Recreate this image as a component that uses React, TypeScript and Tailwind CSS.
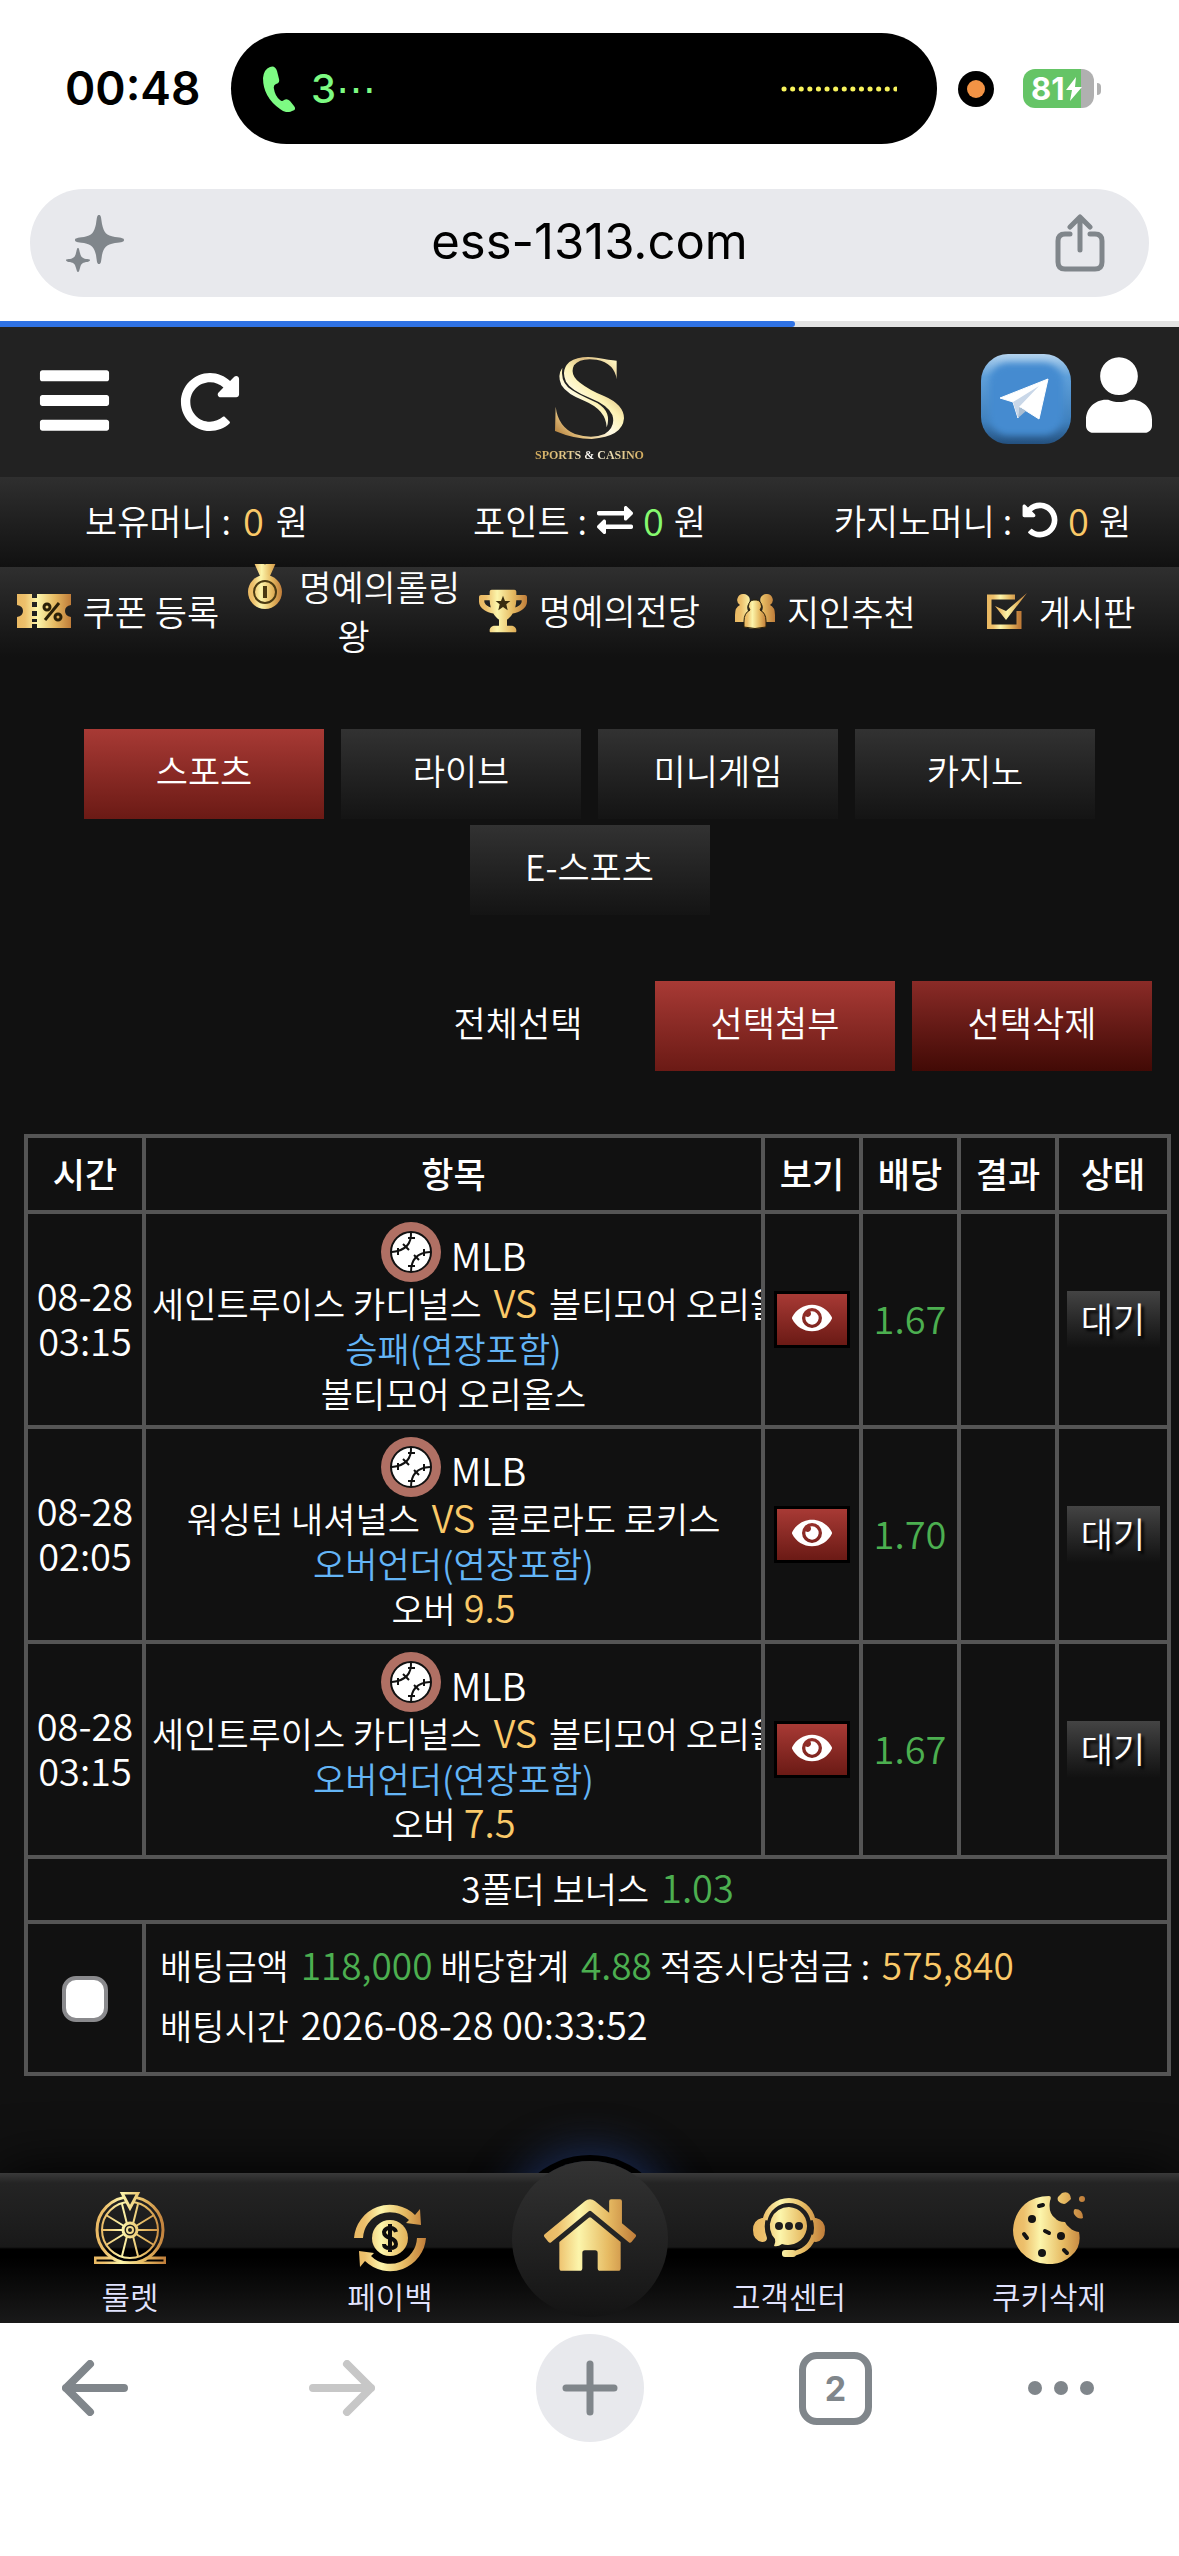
import { useState } from 'react'
import type { ReactNode } from 'react'
import {
  FaBars,
  FaExchangeAlt,
  FaEye,
  FaHome,
  FaRedoAlt,
  FaTrophy,
  FaUndoAlt,
  FaUser,
} from 'react-icons/fa'

const bets = [
  {
    date: '08-28',
    time: '03:15',
    home: '세인트루이스 카디널스',
    away: '볼티모어 오리올스',
    market: '승패(연장포함)',
    pick: '볼티모어 오리올스',
    line: '',
    odds: '1.67',
  },
  {
    date: '08-28',
    time: '02:05',
    home: '워싱턴 내셔널스',
    away: '콜로라도 로키스',
    market: '오버언더(연장포함)',
    pick: '오버',
    line: '9.5',
    odds: '1.70',
  },
  {
    date: '08-28',
    time: '03:15',
    home: '세인트루이스 카디널스',
    away: '볼티모어 오리올스',
    market: '오버언더(연장포함)',
    pick: '오버',
    line: '7.5',
    odds: '1.67',
  },
]

const tabs = ['스포츠', '라이브', '미니게임', '카지노', 'E-스포츠']

function GoldStops() {
  return (
    <>
      <stop offset="0" stopColor="#e9b862" />
      <stop offset="0.15" stopColor="#edc06c" />
      <stop offset="0.38" stopColor="#fcf5ab" />
      <stop offset="0.7" stopColor="#e6ba62" />
      <stop offset="1" stopColor="#bf7c39" />
    </>
  )
}

function Gradients() {
  return (
    <svg className="absolute size-0" aria-hidden="true">
      <defs>
        <linearGradient id="gold">
          <GoldStops />
        </linearGradient>
        <linearGradient
          id="gold72"
          gradientUnits="userSpaceOnUse"
          x1="0"
          x2="72"
          y1="0"
          y2="0"
        >
          <GoldStops />
        </linearGradient>
        <linearGradient id="logo" x1="0" y1="1" x2="0.8" y2="0">
          <stop offset="0" stopColor="#a8702c" />
          <stop offset="0.22" stopColor="#e6c483" />
          <stop offset="0.45" stopColor="#fffbe6" />
          <stop offset="0.62" stopColor="#fdf2b4" />
          <stop offset="0.8" stopColor="#dcbc80" />
          <stop offset="1" stopColor="#fff6c2" />
        </linearGradient>
      </defs>
    </svg>
  )
}

function StatusBar() {
  return (
    <div className="flex h-[177px] items-start bg-white pl-[65px] pr-[78px] pt-[33px] font-['Inter',sans-serif]">
      <span className="w-[166px] text-[46px] font-semibold leading-[111px] text-black">
        00:48
      </span>
      <div className="flex h-[111px] flex-1 items-center rounded-full bg-black pl-8 pr-10">
        <svg viewBox="0 0 32 46" className="h-[46px] w-8 fill-[#7dfb83]">
          <path d="M7 1q5-2 7 4l2 8q1 4-3 5-3 1-2 5 1 7 6 11 2 2 4 0 3-2 6 1l4 5q3 4-2 5-6 3-12-2Q0 31 0 12 1 3 7 1z" />
        </svg>
        <span className="ml-4 text-[40px] font-medium text-[#7dfb83]">
          3⋯
        </span>
        <svg viewBox="0 0 116 6" className="ml-auto h-[6px] w-[116px]">
          <path
            d="M3 3H115"
            stroke="#f8f35c"
            strokeWidth="5"
            strokeLinecap="round"
            strokeDasharray="0.1 8.5"
          />
        </svg>
      </div>
      <div className="flex h-[111px] items-center pl-[21px]">
        <span className="flex size-9 items-center justify-center rounded-full bg-black">
          <span className="size-[18px] rounded-full bg-[#f29345]" />
        </span>
        <div className="ml-[29px] flex h-[39px] w-[71px] items-center rounded-xl bg-[linear-gradient(90deg,#65c466_58px,#b0b0b0_58px)] pl-2 text-white">
          <span className="text-[31px] font-bold leading-[39px]">81</span>
          <svg viewBox="0 0 18 24" className="h-6 w-[18px] fill-white">
            <path d="M11 0 1 13h6L5 24 17 10h-7z" />
          </svg>
        </div>
        <span className="ml-[3px] h-3 w-1 rounded-r-full bg-[#b0b0b0]" />
      </div>
    </div>
  )
}

function AddressBar() {
  return (
    <div className="bg-white px-[30px] pb-6 pt-3">
      <div className="flex h-[108px] items-center rounded-full bg-[#e8e9ed] px-9 text-[#80868b]">
        <button type="button" aria-label="AI">
          <svg viewBox="0 0 58 58" className="size-[58px] fill-current">
            <path d="M33 1c2 0 2 2 3 9 2 9 4 11 13 13 7 1 9 1 9 3s-2 2-9 3c-9 2-11 4-13 12-1 7-1 9-3 9s-2-2-3-9c-2-8-4-10-12-12-7-1-9-1-9-3s2-2 9-3c8-2 10-4 12-13 1-7 1-9 3-9z" />
            <path d="M12 34c1 0 1 1 2 5 1 4 2 5 6 6 4 0 4 1 4 1s0 2-4 2c-4 1-5 2-6 6-1 3-1 4-2 4s-1-1-2-4c-1-4-2-5-6-6-4 0-4-2-4-2s0-1 4-1c4-1 5-2 6-6 1-4 1-5 2-5z" />
          </svg>
        </button>
        <input
          type="text"
          readOnly
          aria-label="주소"
          defaultValue="ess-1313.com"
          className="min-w-0 flex-1 bg-transparent pb-[2px] text-center font-['Inter',sans-serif] text-[49px] text-black outline-none"
        />
        <button type="button" aria-label="공유" className="mr-2">
          <svg
            viewBox="0 0 50 58"
            fill="none"
            stroke="currentColor"
            strokeWidth="5"
            strokeLinecap="round"
            strokeLinejoin="round"
            className="h-[58px] w-[50px]"
          >
            <path d="M15 20h-5q-7 0-7 7v21q0 7 7 7h30q7 0 7-7V27q0-7-7-7h-5" />
            <path d="M25 36V4M15 13 25 3l10 10" />
          </svg>
        </button>
      </div>
    </div>
  )
}

function Logo() {
  return (
    <a href="#" className="flex flex-col items-center">
      <svg viewBox="162 78 213 252" className="h-[84px] w-[71px]">
        <path
          fill="url(#logo)"
          d="M350 92V148Q344 100 290 89Q240 82 222 106Q208 134 240 158Q268 180 312 198Q372 224 372 265Q368 320 275 327Q222 327 165 303L167 230Q174 290 225 312Q276 328 314 312Q348 290 337 255Q325 226 270 204Q212 180 198 155Q182 120 208 96Q238 76 290 83Q330 90 350 92Z"
        />
        <path
          fill="url(#logo)"
          d="M187 113Q171 136 184 165Q200 192 254 213Q318 240 320 292Q336 246 292 219Q226 190 204 172Q181 148 187 113Z"
        />
      </svg>
      <span className="mt-2 bg-[linear-gradient(90deg,#d2aa5b,#e8cf94_35%,#ffffff_50%,#f3e6c0_65%,#d2aa5b)] bg-clip-text font-['Liberation_Serif',serif] text-[12px] font-bold leading-[14px] text-transparent">
        SPORTS &amp; CASINO
      </span>
    </a>
  )
}

function Header() {
  return (
    <header className="grid h-[150px] grid-cols-3 items-center bg-[#222222] pl-[35px] pr-[27px] text-white">
      <div className="flex items-center">
        <button type="button" aria-label="메뉴" className="pb-1">
          <FaBars className="size-[79px]" />
        </button>
        <button type="button" aria-label="새로고침" className="ml-[66px]">
          <FaRedoAlt className="size-[60px]" />
        </button>
      </div>
      <div className="flex justify-center pr-2 pt-[14px]">
        <Logo />
      </div>
      <div className="flex items-center justify-end gap-[15px] pb-[6px]">
        <a href="#" aria-label="텔레그램">
          <svg viewBox="0 0 90 90" className="size-[90px]">
            <defs>
              <linearGradient id="tgEdge" x1="0" y1="0" x2="0" y2="1">
                <stop offset="0" stopColor="#b4d3ee" />
                <stop offset="0.25" stopColor="#5fa0da" />
                <stop offset="0.75" stopColor="#3f80bd" />
                <stop offset="1" stopColor="#24507e" />
              </linearGradient>
              <filter id="tgSoft">
                <feGaussianBlur stdDeviation="3" />
              </filter>
            </defs>
            <rect width="90" height="90" rx="27" fill="url(#tgEdge)" />
            <rect
              x="8"
              y="9"
              width="74"
              height="72"
              rx="20"
              fill="#448bd0"
              filter="url(#tgSoft)"
            />
            <path
              d="M19 44 67 25 58 65 39 53 37 64 32 48z"
              fill="#fff"
              stroke="#fff"
              strokeWidth="1"
              strokeLinejoin="round"
            />
            <path d="M32 48 58 32 38 53 37 64z" fill="#c9d7e8" />
            <path d="M38 53 45 57 37 64z" fill="#a9bed3" />
          </svg>
        </a>
        <button type="button" aria-label="내 정보" className="pb-2">
          <FaUser className="h-[76px] w-[66px]" />
        </button>
      </div>
    </header>
  )
}

function MoneyBar() {
  return (
    <div className="grid h-[90px] grid-cols-3 items-center bg-linear-to-b from-[#2f2f2f] to-[#111111] pb-1 text-[35px] leading-[86px] text-white">
      <p className="flex items-center justify-center gap-3">
        보유머니 :<span className="text-[38px] text-[#fac968]">0</span>원
      </p>
      <p className="flex items-center justify-center gap-[10px]">
        포인트 :
        <button type="button" aria-label="포인트 전환">
          <FaExchangeAlt className="size-9" />
        </button>
        <span className="text-[38px] text-[#86f96f]">0</span>원
      </p>
      <p className="flex items-center justify-center gap-[10px]">
        카지노머니 :
        <button type="button" aria-label="카지노머니 회수">
          <FaUndoAlt className="size-9" />
        </button>
        <span className="text-[38px] text-[#fac968]">0</span>원
      </p>
    </div>
  )
}

function CouponIcon() {
  return (
    <svg viewBox="0 0 54 34" className="-mt-[10px] mr-3 inline h-[34px] w-[54px]">
      <path
        fill="url(#gold)"
        fillRule="evenodd"
        d="M0 0h15v4h5V0h34v11q-6 1-6 6t6 6v11H20v-4h-5v4H0V23q6-1 6-6t-6-6zM15 8v5h5V8zm0 9v5h5v-5zm0 8v3h5v-3z"
      />
      <path d="M42 9 28 26" stroke="#2a2008" strokeWidth="3" />
      <circle cx="30" cy="13" r="3" fill="none" stroke="#2a2008" strokeWidth="3" />
      <circle cx="41" cy="23" r="3" fill="none" stroke="#2a2008" strokeWidth="3" />
    </svg>
  )
}

function MedalIcon() {
  return (
    <svg viewBox="0 8 36 46" className="-mt-[10px] mr-4 inline h-[46px] w-9">
      <path d="M4 0h10l4 9 4-9h10l-9 20h-10z" fill="url(#gold)" />
      <circle cx="18" cy="36" r="17" fill="url(#gold)" />
      <circle cx="18" cy="36" r="11" fill="none" stroke="#4a3a12" strokeWidth="2" />
      <path d="M18 30v12" stroke="#4a3a12" strokeWidth="4" />
    </svg>
  )
}

function TrophyIcon() {
  return (
    <span className="relative -mt-[10px] mr-3 inline-block align-middle">
      <FaTrophy fill="url(#gold)" className="size-12" />
      <svg viewBox="0 0 24 24" className="absolute left-4 top-2 size-4">
        <path
          d="M12 1l3 8h8l-6 5 2 9-7-5-7 5 2-9-6-5h8z"
          fill="#3a2d10"
        />
      </svg>
    </span>
  )
}

function FriendsIcon() {
  return (
    <svg
      viewBox="0 0 40 36"
      className="-mt-[10px] mr-3 inline h-9 w-10"
      fill="url(#gold)"
    >
      <path d="M9 1a6 6 0 0 1 5 9q-3 3-1 8l-3 11H0V22q0-8 5-10A6 6 0 0 1 9 1zM31 1a6 6 0 0 0-5 9q3 3 1 8l3 11h10V22q0-8-5-10a6 6 0 0 0-4-11z" />
      <path
        d="M20 7a6 6 0 0 1 5 10q6 3 6 11v6q-11 3-22 0v-6q0-8 6-11a6 6 0 0 1 5-10z"
        stroke="#2a2008"
      />
    </svg>
  )
}

function BoardIcon() {
  return (
    <svg viewBox="0 0 40 36" className="-mt-[10px] mr-3 inline h-9 w-10">
      <path
        d="M32 18v16H2V4h26"
        fill="none"
        stroke="url(#gold)"
        strokeWidth="5"
      />
      <path d="M8 13l11 5L40 0 19 27z" fill="url(#gold)" />
    </svg>
  )
}

const quickLinks = [
  { title: '쿠폰 등록', icon: <CouponIcon /> },
  { title: '명예의롤링왕', icon: <MedalIcon /> },
  { title: '명예의전당', icon: <TrophyIcon /> },
  { title: '지인추천', icon: <FriendsIcon /> },
  { title: '게시판', icon: <BoardIcon /> },
]

function QuickNav() {
  return (
    <nav className="grid h-[90px] grid-cols-5 content-center items-center bg-linear-to-b from-[#2f2f2f] to-[#111111] pb-1">
      {quickLinks.map((link) => (
        <a
          key={link.title}
          href="#"
          className="break-all px-1 text-center text-[35px] leading-[49px] text-white"
        >
          {link.icon}
          {link.title}
        </a>
      ))}
    </nav>
  )
}

function Baseball() {
  return (
    <svg viewBox="0 0 60 60" className="size-[60px]">
      <circle cx="30" cy="30" r="30" fill="#b07064" />
      <circle cx="30" cy="30" r="20" fill="#fff" stroke="#111" strokeWidth="2" />
      <g fill="none" stroke="#111" strokeWidth="2">
        <path d="M30 10Q31 28 11 30M49 30Q30 31 30 50" />
        <path d="M27 16h7M22 22l6 6M17 26v7M43 27v7M33 33l5 5M27 44h7" />
      </g>
    </svg>
  )
}

function BetTable() {
  return (
    <div className="pl-6 pr-2">
      <table className="w-full table-fixed border-collapse text-center text-[35px] leading-[45px] text-white [&_td]:border-4 [&_td]:border-[#555555] [&_th]:border-4 [&_th]:border-[#555555]">
        <colgroup>
          <col className="w-[118px]" />
          <col />
          <col className="w-[98px]" />
          <col className="w-[98px]" />
          <col className="w-[98px]" />
          <col className="w-[112px]" />
        </colgroup>
        <thead>
          <tr className="h-[76px]">
            {['시간', '항목', '보기', '배당', '결과', '상태'].map((title) => (
              <th key={title} className="px-0 pb-1 pt-0 font-medium">
                {title}
              </th>
            ))}
          </tr>
        </thead>
        <tbody>
          {bets.map((bet, index) => (
            <tr key={index} className="h-[215px]">
              <td className="px-0 pb-[6px] pt-0 text-[38px]">
                {bet.date}
                <br />
                {bet.time}
              </td>
              <td className="overflow-hidden whitespace-nowrap px-[6px] pb-[2px] pt-0">
                <div className="flex h-[58px] items-start justify-center gap-[10px]">
                  <Baseball />
                  <span className="mt-[10px] text-[38px]">MLB</span>
                </div>
                <p>
                  {bet.home}{' '}
                  <span className="mx-1 text-[38px] leading-[40px] text-[#fac968]">
                    VS
                  </span>{' '}
                  {bet.away}
                </p>
                <p className="text-[#64b5f6]">{bet.market}</p>
                <p>
                  {bet.pick}{' '}
                  <span className="text-[38px] leading-[40px] text-[#fac968]">
                    {bet.line}
                  </span>
                </p>
              </td>
              <td className="p-0">
                <button
                  type="button"
                  aria-label="보기"
                  className="inline-flex h-[57px] w-[76px] items-center justify-center border-[3px] border-black bg-linear-to-b from-[#a83a35] to-[#6b1a15] pb-1 align-middle"
                >
                  <FaEye className="size-10" />
                </button>
              </td>
              <td className="px-0 pb-1 pt-0 text-[38px] text-[#4caf50]">
                {bet.odds}
              </td>
              <td className="p-0" />
              <td className="p-0">
                <span className="inline-block h-[57px] w-[93px] bg-linear-to-b from-[#444444] to-[#111111] align-middle leading-[53px] text-shadow-[3px_3px_3px_#000000]">
                  대기
                </span>
              </td>
            </tr>
          ))}
          <tr className="h-[65px]">
            <td colSpan={6} className="px-0 pb-1 pt-0">
              3폴더 보너스{' '}
              <span className="ml-1 text-[38px] leading-[40px] text-[#4caf50]">
                1.03
              </span>
            </td>
          </tr>
          <tr className="h-[152px]">
            <td className="px-0 pb-1 pt-0">
              <input
                type="checkbox"
                aria-label="배팅내역 선택"
                className="size-[46px] appearance-none rounded-[14px] border-4 border-[#8a8a8d] bg-white align-middle checked:bg-[#2f72e4]"
              />
            </td>
            <td
              colSpan={5}
              className="px-[14px] pb-[6px] pt-0 text-left leading-[60px]"
            >
              <p>
                배팅금액{' '}
                <span className="ml-1 text-[37px] leading-[40px] text-[#4caf50]">
                  118,000
                </span>{' '}
                배당합계{' '}
                <span className="ml-1 text-[37px] leading-[40px] text-[#4caf50]">
                  4.88
                </span>{' '}
                적중시당첨금 :{' '}
                <span className="ml-1 text-[37px] leading-[40px] text-[#fac968]">
                  575,840
                </span>
              </p>
              <p>
                배팅시간{' '}
                <span className="ml-1 text-[38px] leading-[40px]">
                  2026-08-28 00:33:52
                </span>
              </p>
            </td>
          </tr>
        </tbody>
      </table>
    </div>
  )
}

function WheelIcon() {
  return (
    <svg
      viewBox="0 0 72 72"
      className="size-[72px]"
      fill="none"
      stroke="url(#gold72)"
      strokeWidth="3"
    >
      <circle cx="36" cy="38" r="33" />
      <circle cx="36" cy="38" r="28" strokeWidth="2" />
      <circle cx="36" cy="38" r="7" />
      <circle cx="36" cy="38" r="3" strokeWidth="2" />
      <path
        d="M8 38.1H29M43 38.1H64M30 34 12 23M42 34 60 23M33 32 28 12M39 32 44 12M30 42 12 53M42 42 60 53M33 44 28 64M39 44 44 64"
        strokeWidth="2"
      />
      <path d="M28 1h16l-8 15z" fill="#1d1d1d" />
      <path d="M18 66H1v5h70v-5H54" />
    </svg>
  )
}

function PaybackIcon() {
  return (
    <svg viewBox="0 0 72 72" className="size-[72px]" fill="url(#gold72)">
      <path d="M0 36A36 36 0 0 1 61 13l5-6 1 16-15-2 3-3A27 27 0 0 0 9 36z" />
      <path d="M72 36A36 36 0 0 1 11 59l-5 6-1-16 15 2-3 3A27 27 0 0 0 63 36z" />
      <circle cx="36" cy="36" r="18" />
      <path
        d="M42 30q-1-4-6-4t-6 4q0 4 6 6t6 6q0 4-6 4t-6-4M36 22v28"
        fill="none"
        stroke="#0d0d0d"
        strokeWidth="4"
      />
    </svg>
  )
}

function SupportIcon() {
  return (
    <svg viewBox="0 0 72 72" className="size-[72px]" fill="url(#gold72)">
      <path
        d="M12 28A24.500 24.500 0 0 1 60 28M61 43Q57 59 38 62"
        fill="none"
        stroke="url(#gold72)"
        strokeWidth="5"
      />
      <path d="M9 26Q0 28 0 38t9 12q5 0 5-4-4-10-1-20zM63 26q9 2 9 12t-9 12q-4 0-4-4 4-10 0-20z" />
      <path d="M36 15a19 19 0 1 1-7 37q-4 3-8 2 2-4 1-7A19 19 0 0 1 36 15z" />
      <rect x="29" y="58" width="14" height="7" rx="3" />
      <g fill="#1d1d1d">
        <circle cx="26" cy="34" r="4" />
        <circle cx="36" cy="34" r="4" />
        <circle cx="46" cy="34" r="4" />
      </g>
    </svg>
  )
}

function CookieIcon() {
  return (
    <svg viewBox="0 0 72 72" className="size-[72px]" fill="url(#gold72)">
      <path d="M36 4q3 0 1 5-2 12 5 17 3 4 10 4 1 3 5 6 3 3 9 4Q69 55 58 64 48 73 34 72 18 71 8 60 0 50 0 38 1 22 12 12 22 4 36 4z" />
      <path d="M49 1q8-3 9 6-5 5-7 5-8-2-6-7zM62 17q8 0 8 9-5 2-9-4-1-4 1-5z" />
      <circle cx="69" cy="7" r="3" />
      <g fill="#141414">
        <circle cx="19" cy="27" r="4" />
        <circle cx="48" cy="44" r="4" />
        <circle cx="29" cy="61" r="4" />
      </g>
      <path
        d="M26 14 30 13M32 39 36 41M11 42 14 46M51 58 54 61"
        stroke="#141414"
        strokeWidth="4"
        strokeLinecap="round"
      />
    </svg>
  )
}

function BottomLink({ title, children }: { title: string; children: ReactNode }) {
  return (
    <a
      href="#"
      className="flex flex-1 flex-col items-center justify-end pb-[6px] text-[31px] leading-[43px] text-[#e2e4ff]"
    >
      {children}
      {title}
    </a>
  )
}

function BottomNav() {
  return (
    <nav className="relative isolate h-[150px] shadow-[0_0_60px_#000000]">
      <div className="absolute -top-3 left-1/2 -z-20 size-[156px] -translate-x-1/2 rounded-full shadow-[0_0_0_6px_#000000,0_0_40px_12px_#1a2a52]" />
      <div className="flex h-full bg-[linear-gradient(180deg,#3a3a3a_0px,#242424_10px,#191919_74px,#000000_76px,#000000_84px,#191919_150px)]">
        <BottomLink title="룰렛">
          <span className="mb-[10px]">
            <WheelIcon />
          </span>
        </BottomLink>
        <BottomLink title="페이백">
          <PaybackIcon />
        </BottomLink>
        <div className="flex w-[139px] justify-center">
          <a
            href="#"
            aria-label="홈"
            className="-mt-3 flex size-[156px] shrink-0 items-center justify-center rounded-full bg-linear-to-b from-[#333333] to-[#141414] pb-2"
          >
            <FaHome fill="url(#gold)" className="size-[92px]" />
          </a>
        </div>
        <BottomLink title="고객센터">
          <span className="mb-[10px]">
            <SupportIcon />
          </span>
        </BottomLink>
        <BottomLink title="쿠키삭제">
          <span className="mb-[10px]">
            <CookieIcon />
          </span>
        </BottomLink>
      </div>
    </nav>
  )
}

function BrowserToolbar() {
  return (
    <div className="relative flex-1 bg-white pt-[11px]">
      <div className="grid h-[108px] grid-cols-[190fr_304fr_192fr_299fr_152fr] place-items-center pr-[42px] text-[#80868b]">
        <button type="button" aria-label="뒤로">
          <svg
            viewBox="0 0 66 56"
            fill="none"
            stroke="currentColor"
            strokeWidth="8"
            strokeLinecap="round"
            strokeLinejoin="round"
            className="h-14 w-[66px]"
          >
            <path d="M62 28H4M28 4 4 28l24 24" />
          </svg>
        </button>
        <button type="button" aria-label="앞으로" className="text-[#c7c7c7]">
          <svg
            viewBox="0 0 66 56"
            fill="none"
            stroke="currentColor"
            strokeWidth="8"
            strokeLinecap="round"
            strokeLinejoin="round"
            className="h-14 w-[66px]"
          >
            <path d="M4 28H62M38 4l24 24L38 52" />
          </svg>
        </button>
        <button
          type="button"
          aria-label="새 탭"
          className="flex size-[108px] items-center justify-center rounded-full bg-[#e8e9ed]"
        >
          <svg
            viewBox="0 0 56 56"
            stroke="currentColor"
            strokeWidth="7"
            strokeLinecap="round"
            className="size-14"
          >
            <path d="M28 4V52M4 28H52" />
          </svg>
        </button>
        <button
          type="button"
          className="size-[73px] rounded-[18px] border-[7px] border-current font-['Inter',sans-serif] text-[34px] font-bold leading-[59px]"
        >
          2
        </button>
        <button type="button" aria-label="더보기" className="flex gap-3">
          <span className="size-[14px] rounded-full bg-current" />
          <span className="size-[14px] rounded-full bg-current" />
          <span className="size-[14px] rounded-full bg-current" />
        </button>
      </div>
    </div>
  )
}

export default function App() {
  const [activeTab, setActiveTab] = useState<number>(0)

  return (
    <div className="flex min-h-screen flex-col bg-white">
      <Gradients />
      <StatusBar />
      <AddressBar />
      <div
        role="progressbar"
        aria-label="로딩"
        aria-valuenow={67}
        className="h-[6px] bg-[#e3e3e3]"
      >
        <div className="h-full w-[67.4%] rounded-r-full bg-[#2f72e4]" />
      </div>

      <div className="bg-[#111111] font-['Noto_Sans_CJK_KR',sans-serif] font-[350]">
        <Header />
        <MoneyBar />
        <QuickNav />

        <div className="flex flex-wrap justify-center gap-x-[17px] gap-y-[6px] px-10 pt-[72px]">
          {tabs.map((tab, index) => (
            <button
              key={tab}
              type="button"
              onClick={() => setActiveTab(index)}
              className={`${
                activeTab === index
                  ? 'from-[#a83a35] to-[#6b1a15]'
                  : 'from-[#323232] to-[#141414]'
              } h-[90px] w-[240px] bg-linear-to-b pb-2 text-[35px] text-white`}
            >
              {tab}
            </button>
          ))}
        </div>

        <div className="flex justify-end gap-[17px] pb-[63px] pr-[27px] pt-[66px] text-[35px] text-white">
          <button type="button" className="h-[90px] w-[240px] pb-2">
            전체선택
          </button>
          <button
            type="button"
            className="h-[90px] w-[240px] bg-linear-to-b from-[#a83a35] to-[#6b1a15] pb-2"
          >
            선택첨부
          </button>
          <button
            type="button"
            className="h-[90px] w-[240px] bg-linear-to-b from-[#8a2b27] to-[#420a06] pb-2"
          >
            선택삭제
          </button>
        </div>

        <BetTable />
        <div className="h-[97px]" />
        <BottomNav />
      </div>

      <BrowserToolbar />
    </div>
  )
}
